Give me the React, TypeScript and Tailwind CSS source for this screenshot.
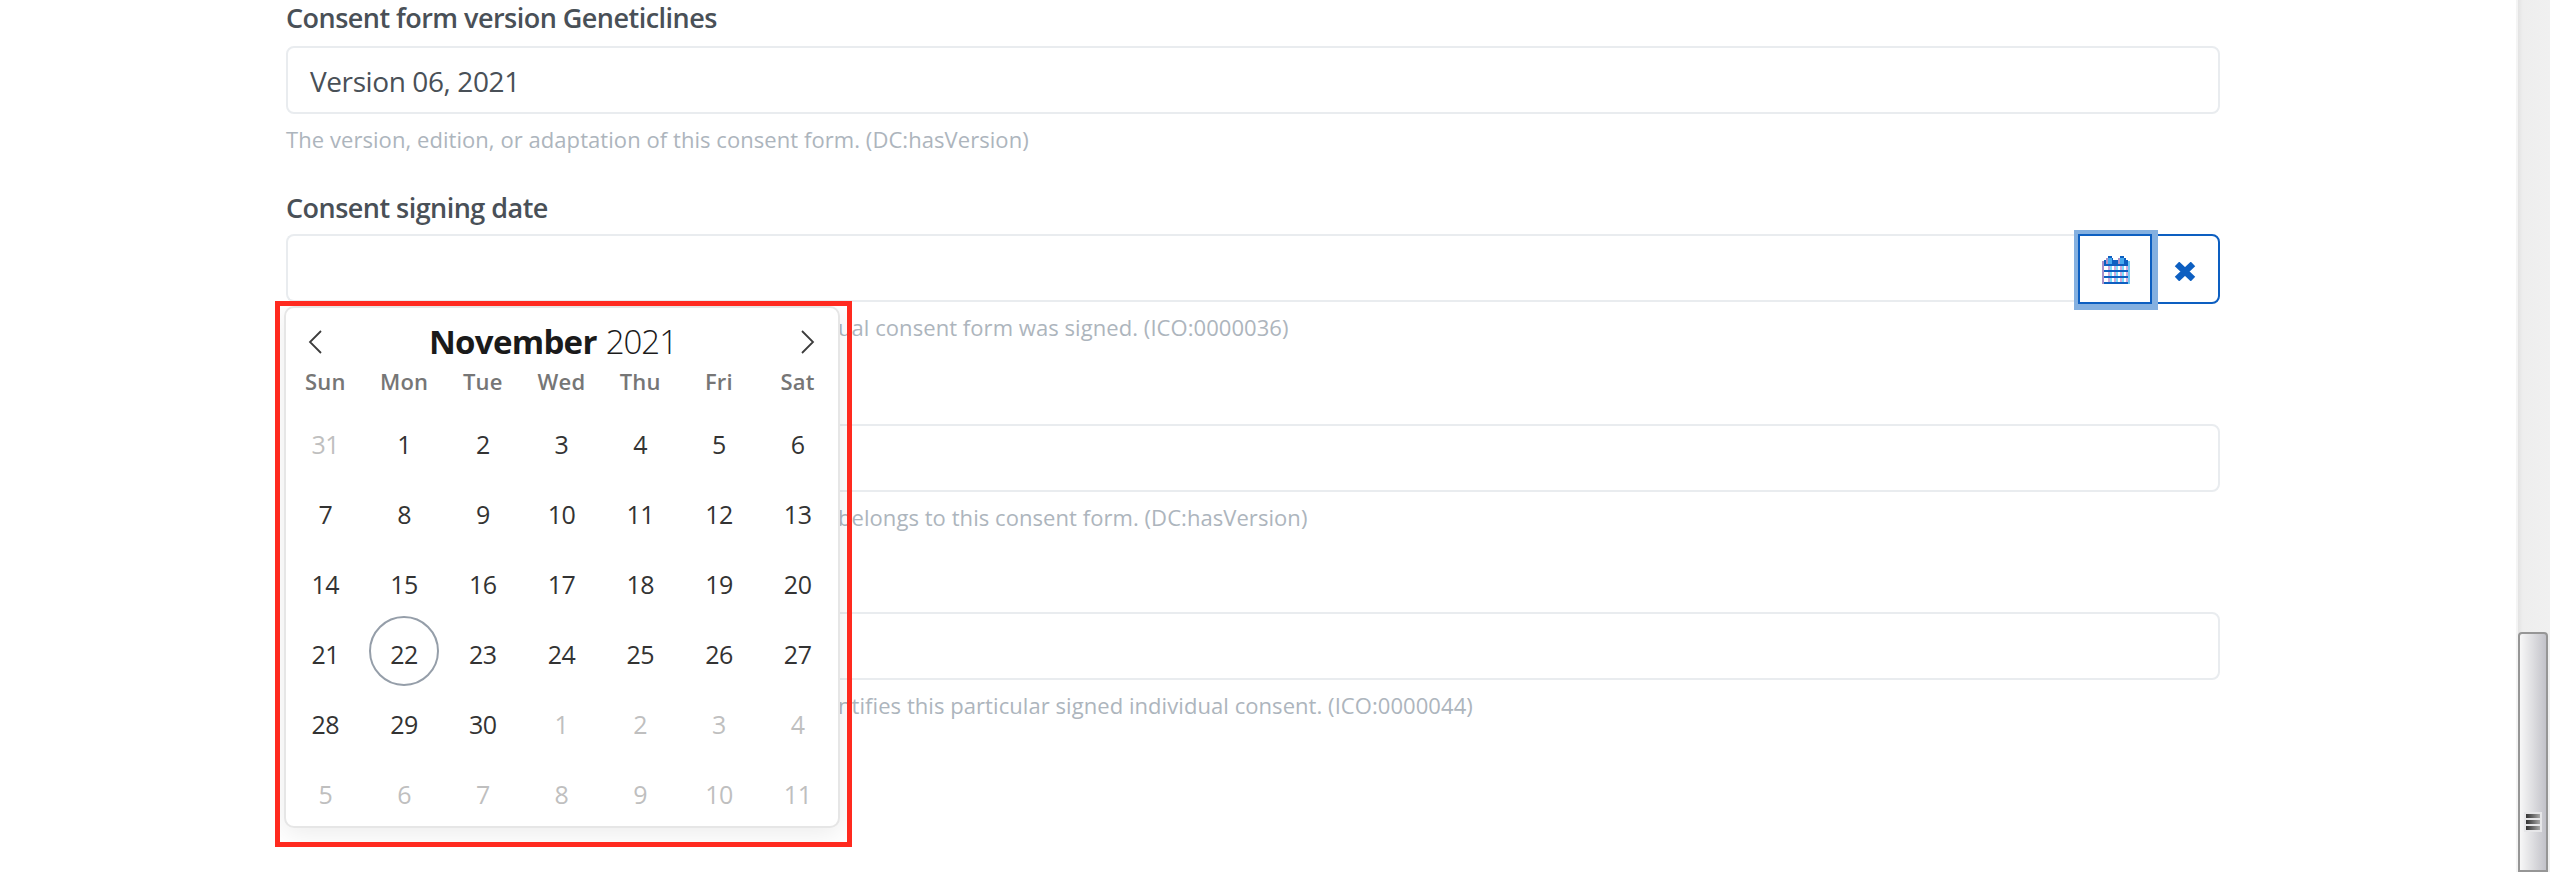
import React from "react";

const weekdays = ["Sun", "Mon", "Tue", "Wed", "Thu", "Fri", "Sat"];

const days = [
  31, 1, 2, 3, 4, 5, 6, 7, 8, 9, 10, 11, 12, 13, 14, 15, 16, 17, 18, 19, 20, 21,
  22, 23, 24, 25, 26, 27, 28, 29, 30, 1, 2, 3, 4, 5, 6, 7, 8, 9, 10, 11,
];

function Label({ children }: { children?: React.ReactNode }) {
  return (
    <div className="h-9 text-[27px] leading-9 font-semibold tracking-[-0.53px] whitespace-nowrap text-[#495057]">
      {children}
    </div>
  );
}

function Help({ children, inset = false }: { children: React.ReactNode; inset?: boolean }) {
  return (
    <div
      className={
        "mt-2 h-[34px] text-[22px] leading-[34px] tracking-[0.06px] whitespace-nowrap text-[#adb5bd] " +
        (inset ? "pl-[552px]" : "")
      }
    >
      {children}
    </div>
  );
}

function Box({ children }: { children?: React.ReactNode }) {
  return (
    <div className="flex h-[68px] items-center rounded-lg border-2 border-[#e9ecef] bg-white pt-0.5 pl-[22px] text-[28px] tracking-[-0.4px] text-[#495057]">
      {children}
    </div>
  );
}

function CalendarIcon() {
  return (
    <svg width="28" height="28" viewBox="0 0 28 28" shapeRendering="crispEdges">
      <path d="M0 5H2V28H0Z" fill="#a98fc8" />
      <path d="M26 5H28V28H26Z" fill="#6fc8f5" />
      <path d="M6 10H8V26H6ZM12 10H14V26H12ZM18 10H20V26H18ZM24 10H26V26H24Z" fill="#cfaadb" />
      <path d="M8 10H10V26H8ZM14 10H16V26H14ZM20 10H22V26H20Z" fill="#7fdcfa" />
      <path d="M2 4H26V10H2ZM2 14H26V16H2ZM2 20H26V22H2ZM2 26H26V28H2Z" fill="#0d5fc1" />
      <path d="M4 2H6V8H4ZM16 2H18V8H16Z" fill="#b193c4" />
      <path d="M6 0H10V2H6ZM18 0H22V2H18Z" fill="#0d5fc1" />
      <path d="M6 2H10V8H6ZM18 2H22V8H18Z" fill="#45a9ee" />
      <path d="M10 2H11V5H10ZM22 2H24V5H22Z" fill="#0d5fc1" />
    </svg>
  );
}

function Calendar() {
  return (
    <div className="absolute top-[301px] left-[275px] h-[546px] w-[577px] overflow-hidden border-[5px] border-[#ff2a1f]">
      <div className="ml-1 h-[522px] w-[556px] rounded-[10px] border-2 border-[#e6e6e6] bg-white pr-px shadow-[0_6px_26px_rgba(0,0,0,0.08)]">
        <div className="flex h-[60px] items-center justify-between px-[22px] pt-2">
          <svg width="14" height="24" viewBox="0 0 14 24" fill="none" stroke="#3c3c3c" strokeWidth="1.800">
            <path d="M13 1L2 12L13 23" />
          </svg>
          <div className="mr-[17px] flex items-center gap-[9px] text-[33px] leading-10 text-[#1a1a1a]">
            <span className="font-bold tracking-[-0.7px]">November</span>
            <span className="font-light tracking-[-1px]">2021</span>
          </div>
          <svg width="14" height="24" viewBox="0 0 14 24" fill="none" stroke="#3c3c3c" strokeWidth="1.800">
            <path d="M1 1L12 12L1 23" />
          </svg>
        </div>
        <div className="grid h-[26px] grid-cols-7 text-center text-[22px] leading-[26px] font-semibold tracking-[0.2px] text-[#767676]">
          {weekdays.map((d) => (
            <span key={d}>{d}</span>
          ))}
        </div>
        <div className="grid grid-cols-7 pt-3">
          {days.map((d, i) => (
            <div key={i} className="flex h-[70px] justify-center">
              <div
                className={
                  "flex h-[70px] w-[70px] items-center justify-center rounded-full border-2 pt-[7px] text-[25px] tracking-[-0.5px] " +
                  (i === 22 ? "border-[#959ea9] " : "border-transparent ") +
                  (i === 0 || i > 30 ? "text-[#bfbfbf]" : "text-[#333333]")
                }
              >
                {d}
              </div>
            </div>
          ))}
        </div>
      </div>
    </div>
  );
}

function Scrollbar() {
  return (
    <div className="flex h-full w-[34px] flex-col border-l-2 border-[#f4f4f4] bg-linear-to-r from-[#e3e3e3] via-[#eeeeee] via-15% to-[#f0f0f0]">
      <div className="mt-[632px] flex h-[260px] w-[30px] flex-col items-center rounded-t-[4px] border-2 border-[#969696] bg-linear-to-r from-[#f7f7f7] via-[#dddde0] via-50% to-[#c2c2c9] pt-[178px]">
        <div className="flex flex-col gap-0.5 bg-[#e6e6e8] p-0.5">
          <i className="h-1 w-[14px] bg-linear-to-r from-[#333333] to-[#a8a8a8]" />
          <i className="h-1 w-[14px] bg-linear-to-r from-[#333333] to-[#a8a8a8]" />
          <i className="h-1 w-[14px] bg-linear-to-r from-[#333333] to-[#a8a8a8]" />
        </div>
      </div>
    </div>
  );
}

export default function App() {
  return (
    <div className="relative flex h-[872px] w-[2550px] justify-between overflow-hidden bg-white font-['Open_Sans','Noto_Sans',sans-serif]">
      <main className="ml-[286px] w-[1934px]">
        <section className="h-[190px]">
          <Label>Consent form version Geneticlines</Label>
          <div className="h-[10px]" />
          <Box>Version 06, 2021</Box>
          <Help>The version, edition, or adaptation of this consent form. (DC:hasVersion)</Help>
        </section>
        <section className="h-[190px]">
          <Label>Consent signing date</Label>
          <div className="mt-2 flex h-[68px]">
            <div className="h-[68px] w-[1792px] rounded-l-lg border-2 border-r-0 border-[#e9ecef]" />
            <button className="z-10 flex h-[70px] w-[74px] items-center justify-center border-2 border-[#0d5fc1] bg-white pt-0.5 pl-0.5 shadow-[1px_1px_0_5px_#84b0e0]">
              <CalendarIcon />
            </button>
            <button className="-ml-0.5 flex h-[70px] w-[70px] items-center justify-center rounded-r-lg border-2 border-[#0d5fc1] bg-white pt-1">
              <svg width="22" height="19" viewBox="0 0 22 19" stroke="#0d5fc1" strokeWidth="6.500">
                <path d="M3 2L19 17M19 2L3 17" />
              </svg>
            </button>
          </div>
          <Help inset>ual consent form was signed. (ICO:0000036)</Help>
        </section>
        <section className="h-[188px] pt-11">
          <Box />
          <Help inset>belongs to this consent form. (DC:hasVersion)</Help>
        </section>
        <section className="pt-11">
          <Box />
          <Help inset>ntifies this particular signed individual consent. (ICO:0000044)</Help>
        </section>
      </main>
      <Scrollbar />
      <Calendar />
    </div>
  );
}
